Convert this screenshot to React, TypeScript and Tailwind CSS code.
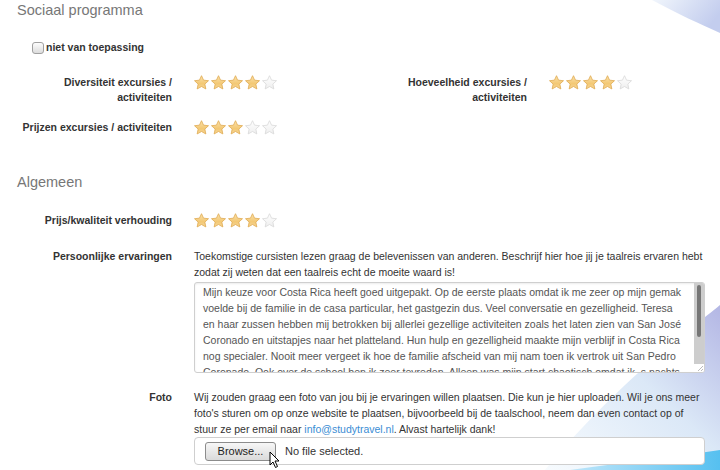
import type { ReactNode } from "react";

const STAR =
  "7.5,0.7 9.56,5.17 14.5,5.71 10.83,9.08 11.85,13.95 7.5,11.5 3.15,13.95 4.17,9.08 0.5,5.71 5.44,5.17";

function Star({ on }: { on: boolean }) {
  return (
    <svg width="15" height="15" viewBox="0 0 15 15">
      <polygon
        points={STAR}
        fill={on ? "url(#starOn)" : "url(#starOff)"}
        stroke={on ? "#dfa94f" : "#d8d8d8"}
        strokeWidth="0.8"
        strokeLinejoin="round"
      />
    </svg>
  );
}

function Stars({ value }: { value: number }) {
  return (
    <div className="flex gap-[2px]">
      {[1, 2, 3, 4, 5].map((i) => (
        <Star key={i} on={i <= value} />
      ))}
    </div>
  );
}

function Field({ label, children, lead = "leading-[15px]" }: { label: ReactNode; children: ReactNode; lead?: string }) {
  return (
    <div className="flex w-[355px] pl-[17px]">
      <div className={`w-[155px] shrink-0 text-right font-bold text-[#333] ${lead}`}>{label}</div>
      <div className="ml-[22px]">{children}</div>
    </div>
  );
}

const story = [
  "Mijn keuze voor Costa Rica heeft goed uitgepakt. Op de eerste plaats omdat ik me zeer op mijn gemak",
  "voelde bij de familie in de casa particular, het gastgezin dus. Veel conversatie en gezelligheid. Teresa",
  "en haar zussen hebben mij betrokken bij allerlei gezellige activiteiten zoals het laten zien van San José",
  "Coronado en uitstapjes naar het platteland. Hun hulp en gezelligheid maakte mijn verblijf in Costa Rica",
  "nog specialer. Nooit meer vergeet ik hoe de familie afscheid van mij nam toen ik vertrok uit San Pedro",
  "Coronado. Ook over de school ben ik zeer tevreden. Alleen was mijn start chaotisch omdat ik, s nachts",
];

export default function App() {
  return (
    <div className="relative h-[470px] w-[720px] overflow-hidden bg-white font-['Liberation_Sans',Arial,sans-serif] text-[10.5px] text-[#333]">
      {/* background swooshes */}
      <svg className="absolute inset-0" width="720" height="470" viewBox="0 0 720 470">
        <defs>
          <linearGradient id="topSw" x1="0" y1="0" x2="1" y2="0.4">
            <stop offset="0" stopColor="#f1f6fc" />
            <stop offset="1" stopColor="#c3cdee" />
          </linearGradient>
          <linearGradient id="botSw" x1="0" y1="1" x2="1" y2="0">
            <stop offset="0" stopColor="#f7fbfe" />
            <stop offset="0.55" stopColor="#dbe8f7" />
            <stop offset="1" stopColor="#b3b6e4" />
          </linearGradient>
          <linearGradient id="cyanSw" x1="0" y1="0" x2="1" y2="0">
            <stop offset="0" stopColor="#bfe6fa" />
            <stop offset="1" stopColor="#56c0f0" />
          </linearGradient>
          <linearGradient id="starOn" x1="0" y1="0" x2="0" y2="1">
            <stop offset="0" stopColor="#fbe2ab" />
            <stop offset="0.6" stopColor="#f3c874" />
            <stop offset="1" stopColor="#f6d79a" />
          </linearGradient>
          <linearGradient id="starOff" x1="0" y1="0" x2="0" y2="1">
            <stop offset="0" stopColor="#ffffff" />
            <stop offset="1" stopColor="#eeeeee" />
          </linearGradient>
        </defs>
        <path d="M652 0 C678 14 700 24 720 33 L720 0 Z" fill="url(#topSw)" />
        <path d="M720 305 C690 330 620 380 545 470 L720 470 Z" fill="url(#botSw)" />
        <path d="M570 470 C630 462 680 456 720 450 L720 470 Z" fill="url(#cyanSw)" />
      </svg>

      <div className="relative">
        <div className="pl-[17px] text-[14.5px] leading-[20px] text-[#777]">Sociaal programma</div>

        <label className="mt-[20px] flex items-center gap-[2px] pl-[32px] font-bold leading-[15px] text-[#333]">
          <span className="h-[12px] w-[12px] rounded-[3px] border border-[#a0a0a0] bg-gradient-to-b from-[#fdfdfd] to-[#dcdcdc]" />
          niet van toepassing
        </label>

        <div className="mt-[20px] flex">
          <Field label={<>Diversiteit excursies /<br />activiteiten</>}>
            <Stars value={4} />
          </Field>
          <Field label={<>Hoeveelheid excursies /<br />activiteiten</>}>
            <Stars value={4} />
          </Field>
        </div>

        <div className="mt-[15px]">
          <Field label="Prijzen excursies / activiteiten">
            <Stars value={3} />
          </Field>
        </div>

        <div className="mt-[37px] pl-[17px] text-[14.5px] leading-[20px] text-[#777]">Algemeen</div>

        <div className="mt-[21px]">
          <Field label="Prijs/kwaliteit verhouding">
            <Stars value={4} />
          </Field>
        </div>

        <div className="mt-[20px] flex pl-[17px]">
          <div className="w-[155px] shrink-0 text-right font-bold leading-[16px]">Persoonlijke ervaringen</div>
          <div className="ml-[22px] w-[511px]">
            <div className="whitespace-nowrap leading-[16px]">
              <div>Toekomstige cursisten lezen graag de belevenissen van anderen. Beschrijf hier hoe jij je taalreis ervaren hebt</div>
              <div>zodat zij weten dat een taalreis echt de moeite waard is!</div>
            </div>
            <div className="mt-[2px] flex h-[91px] overflow-hidden rounded-[3px] border border-[#cfcfcf] bg-white shadow-[inset_0_1px_2px_rgba(0,0,0,0.08)]">
              <div className="flex-1 overflow-hidden whitespace-nowrap pl-[8px] pt-[1px] leading-[16px] text-[#555]">
                {story.map((l) => (
                  <div key={l}>{l}</div>
                ))}
              </div>
              <div className="flex w-[10px] flex-col">
                <div className="flex flex-1 justify-center bg-[#cdcdcd] pt-[2px]">
                  <div className="h-[52px] w-[4px] rounded-full bg-[#767676]" />
                </div>
                <div className="flex h-[8px] items-end justify-end bg-white">
                  <svg width="7" height="7" viewBox="0 0 7 7">
                    <path d="M6 1 L1 6 M6 4 L4 6" stroke="#bbb" strokeWidth="1" />
                  </svg>
                </div>
              </div>
            </div>
          </div>
        </div>

        <div className="mt-[16px] flex pl-[17px]">
          <div className="w-[155px] shrink-0 text-right font-bold leading-[16px]">Foto</div>
          <div className="ml-[22px] w-[511px]">
            <div className="whitespace-nowrap leading-[16px]">
              <div>Wij zouden graag een foto van jou bij je ervaringen willen plaatsen. Die kun je hier uploaden. Wil je ons meer</div>
              <div>foto's sturen om op onze website te plaatsen, bijvoorbeeld bij de taalschool, neem dan even contact op of</div>
              <div>
                stuur ze per email naar <span className="text-[#3a8dd4]">info@studytravel.nl</span>. Alvast hartelijk dank!
              </div>
            </div>
            <div className="relative flex h-[28px] items-center rounded-[4px] border border-[#cfcfcf] bg-white pl-[10px]">
              <div className="flex h-[19px] w-[71px] items-center justify-center rounded-[3px] border border-[#8c8c8c] bg-gradient-to-b from-[#f7f7f7] to-[#dadada] text-[11px] text-[#222]">
                Browse...
              </div>
              <span className="ml-[9px] text-[11px] text-[#333]">No file selected.</span>
              <svg className="absolute left-[74px] top-[13px]" width="12" height="18" viewBox="0 0 12 18">
                <path d="M1 1 L1 14 L4 11 L6.5 16.5 L8.5 15.5 L6 10 L10 10 Z" fill="#fff" stroke="#000" strokeWidth="1" strokeLinejoin="round" />
              </svg>
            </div>
          </div>
        </div>
      </div>
    </div>
  );
}
